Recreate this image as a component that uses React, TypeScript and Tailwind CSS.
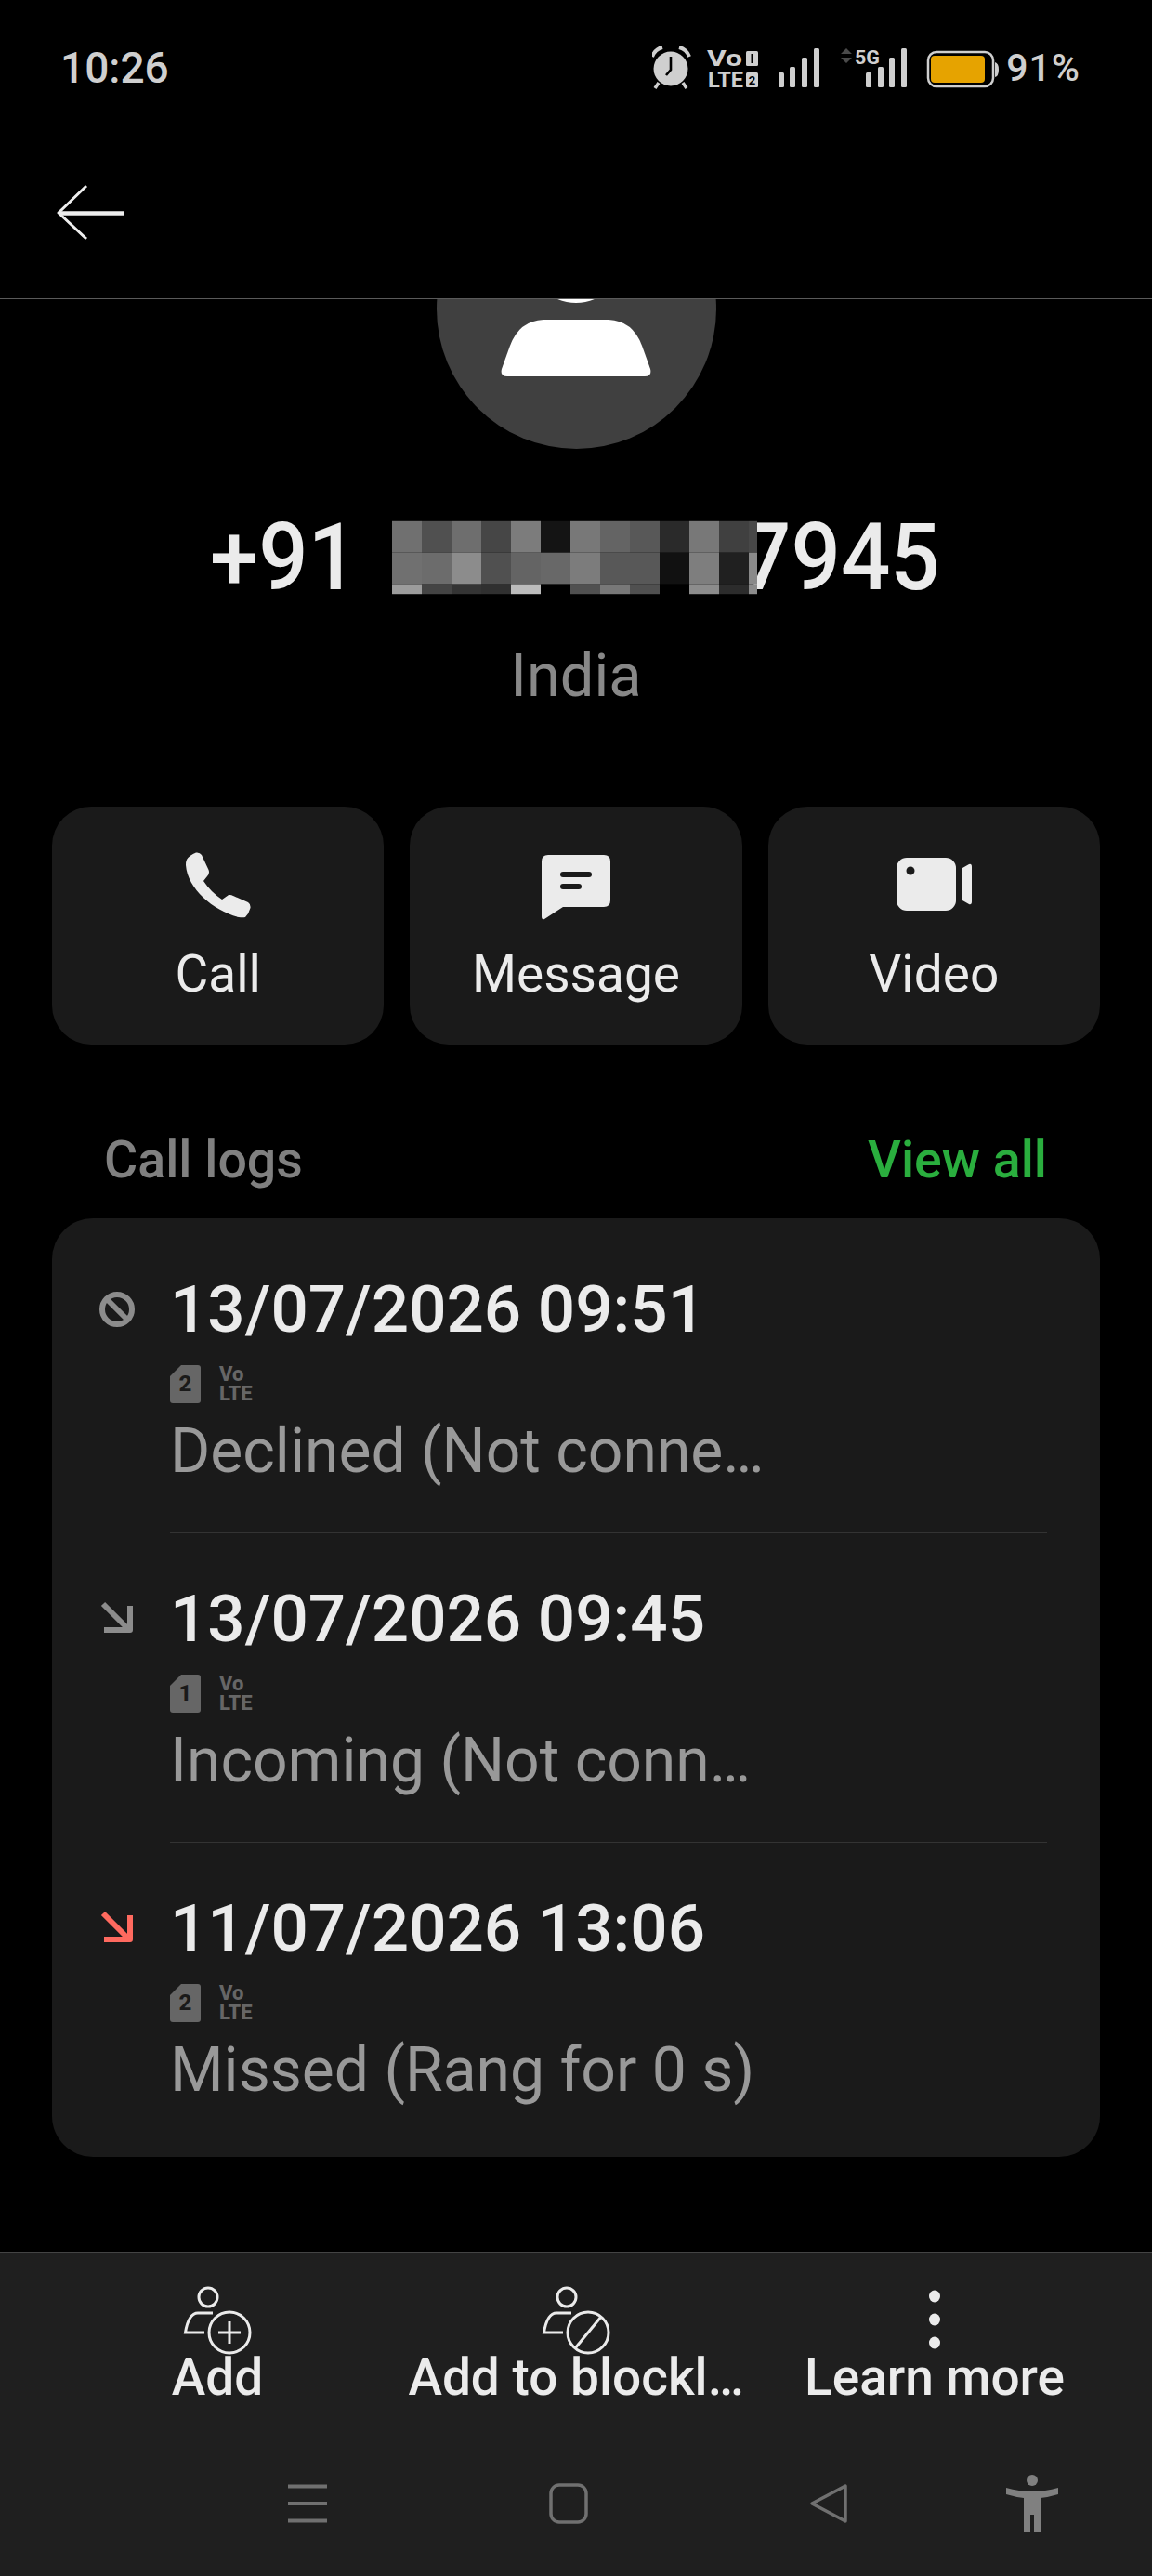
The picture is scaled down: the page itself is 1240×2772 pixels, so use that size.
import React from "react";

const font = { fontFamily: "Roboto, 'Liberation Sans', sans-serif" };

const cells = [
  "bg-[#707070]","bg-[#505050]","bg-[#6e6e6e]","bg-[#464646]","bg-[#7c7c7c]","bg-[#141414]","bg-[#787878]","bg-[#646464]","bg-[#585858]","bg-[#2a2a2a]","bg-[#787878]","bg-[#404040]","bg-[#484848]",
  "bg-[#707070]","bg-[#6c6c6c]","bg-[#8c8c8c]","bg-[#505050]","bg-[#646464]","bg-[#686868]","bg-[#7c7c7c]","bg-[#585858]","bg-[#585858]","bg-[#111111]","bg-[#7e7e7e]","bg-[#202020]","bg-[#8a8a8a]",
  "bg-[#9c9c9c]","bg-[#444444]","bg-[#343434]","bg-[#303030]","bg-[#bcbcbc]","bg-[#000000]","bg-[#505050]","bg-[#787878]","bg-[#505050]","bg-[#000000]","bg-[#8c8c8c]","bg-[#2c2c2c]","bg-[#8c8c8c]",
];

function StatusIcons() {
  const c = "#cfcfcf";
  const bars = (x: number[]) =>
    x.map((bx, i) => (
      <rect key={bx} x={bx} y={[79, 73, 63, 53][i]} width={6} height={95 - [79, 73, 63, 53][i]} rx={1.5} fill={c} />
    ));
  return (
    <svg width="374" height="60" viewBox="705 45 374 60" className="block">
      <circle cx="725" cy="75" r="18.5" fill={c} />
      <path d="M725 62v14l-5 6" stroke="#000" strokeWidth="2.6" fill="none" />
      <path d="M705 62q3-8 11-10M745 62q-3-8-11-10" stroke={c} strokeWidth="4" fill="none" />
      <path d="M712 90l-4 6M738 90l4 6" stroke={c} strokeWidth="3.5" />
      <text x="764" y="72" fontSize="24" fontWeight="700" fill={c} fontFamily="Roboto" textLength="38" lengthAdjust="spacingAndGlyphs">Vo</text>
      <text x="765" y="95" fontSize="24" fontWeight="700" fill={c} fontFamily="Roboto" textLength="38" lengthAdjust="spacingAndGlyphs">LTE</text>
      <rect x="806" y="56" width="13" height="16" rx="1.5" fill={c} />
      <rect x="811.5" y="59" width="2.5" height="10" fill="#000" />
      <rect x="806" y="79" width="13" height="16" rx="1.5" fill={c} />
      <text x="812.5" y="92" fontSize="13" fontWeight="700" fill="#000" textAnchor="middle" fontFamily="Roboto">2</text>
      {bars([841, 853, 866, 879])}
      <path d="M914 53l6 6h-12zM914 69l6-6h-12z" fill="#4a4a4a" />
      <text x="923" y="69.5" fontSize="21" fontWeight="700" fill={c} fontFamily="Roboto" textLength="27" lengthAdjust="spacingAndGlyphs">5G</text>
      {bars([935, 948, 960, 973])}
      <rect x="1002" y="57" width="70" height="37" rx="9" fill="none" stroke={c} strokeWidth="2.5" />
      <rect x="1005" y="61" width="58" height="29" rx="4" fill="#e6a300" />
      <path d="M1074 68q4 1 4 8t-4 8z" fill={c} />
    </svg>
  );
}

function BackArrow() {
  return (
    <svg width="76" height="62" viewBox="60 199 76 62" className="block">
      <path d="M93 201L63 230L93 258" fill="none" stroke="#eeeeee" strokeWidth="3" strokeLinejoin="round" />
      <path d="M64 230.5H133" stroke="#eeeeee" strokeWidth="4.5" />
    </svg>
  );
}

function PhoneIcon() {
  return (
    <svg width="70" height="71" viewBox="0 0 70 71" className="block">
      <path d="M1 8Q4 3 11 .5Q15 0 17 3L24.5 19Q26 23 23 26L19 31Q27 43 39 51L44 47.5Q47 45 51 47L67 54Q70 56 69.5 60Q68 66 64 70Q61 70.5 57 70C30 63 2 40 0 14Q0 10 1 8Z" fill="#ebebeb" />
    </svg>
  );
}

function MessageIcon() {
  return (
    <svg width="74" height="70" viewBox="0 0 74 70" className="block translate-y-[3px]">
      <path d="M7 0H67Q74 0 74 7V49Q74 56 67 56H23L3 69Q0 70 0 66V7Q0 0 7 0Z" fill="#ebebeb" />
      <rect x="20" y="18" width="34" height="6" rx="3" fill="#1a1a1a" />
      <rect x="20" y="31" width="23" height="6" rx="3" fill="#1a1a1a" />
    </svg>
  );
}

function VideoIcon() {
  return (
    <svg width="81" height="70" viewBox="0 0 81 58" className="block">
      <rect x="0" y="0" width="64" height="57" rx="11" fill="#ebebeb" />
      <path d="M71 11L78 7Q81 6 81 10V47Q81 51 78 50L71 46Z" fill="#ebebeb" />
      <circle cx="15" cy="14" r="4.5" fill="#1a1a1a" />
    </svg>
  );
}

function BanIcon() {
  return (
    <svg width="38" height="38" viewBox="0 0 38 38" className="block">
      <circle cx="19" cy="19" r="16" fill="none" stroke="#8c8c8c" strokeWidth="6" />
      <path d="M8 8L30 30" stroke="#8c8c8c" strokeWidth="6" />
    </svg>
  );
}

function ArrowIn({ color }: { color: string }) {
  return (
    <svg width="36" height="36" viewBox="0 0 36 36" className="block">
      <path d="M3 3L30 30M4 31H32V5" fill="none" stroke={color} strokeWidth="6" strokeLinejoin="round" />
    </svg>
  );
}

function SimIcon({ n }: { n: string }) {
  return (
    <svg width="33" height="41" viewBox="0 0 33 41" className="block">
      <path d="M12 0H30Q33 0 33 3V38Q33 41 30 41H3Q0 41 0 38V12Z" fill="#666666" />
      <text x="16.5" y="28" textAnchor="middle" fontSize="24" fontWeight="800" fill="#1a1a1a" fontFamily="Roboto">{n}</text>
    </svg>
  );
}

function VoLte() {
  return (
    <div className="flex flex-col text-[#666666] font-extrabold text-[22px] leading-[21px] mt-[-1px]" style={font}>
      <span>Vo</span>
      <span>LTE</span>
    </div>
  );
}

function AddIcon({ kind }: { kind: "plus" | "ban" }) {
  return (
    <svg width="74" height="74" viewBox="199 2460 74 74" className="block">
      <circle cx="226" cy="2472" r="10" fill="none" stroke="#ebebeb" strokeWidth="3" />
      <path d="M231 2489H215Q205 2489 201.5 2510H222" fill="none" stroke="#ebebeb" strokeWidth="3" />
      <circle cx="249" cy="2510" r="22" fill="none" stroke="#ebebeb" strokeWidth="3" />
      {kind === "plus" ? (
        <path d="M249 2498V2522M237 2510H261" stroke="#ebebeb" strokeWidth="3" />
      ) : (
        <path d="M263 2493L235 2527" stroke="#ebebeb" strokeWidth="3" />
      )}
    </svg>
  );
}

function Dots() {
  return (
    <svg width="74" height="74" viewBox="0 0 74 74" className="block">
      <ellipse cx="37" cy="11" rx="6" ry="6.5" fill="#ebebeb" />
      <ellipse cx="37" cy="36" rx="6" ry="6.5" fill="#ebebeb" />
      <ellipse cx="37" cy="61" rx="6" ry="6.5" fill="#ebebeb" />
    </svg>
  );
}

function LogRow({
  icon, sim, date, status, last,
}: { icon: React.ReactNode; sim: string; date: string; status: string; last?: boolean }) {
  return (
    <div className="flex">
      <div className="w-[127px] shrink-0 flex justify-center pt-[73px] pl-[13px]">
        <div className="w-[40px] h-[40px] flex justify-center items-start">{icon}</div>
      </div>
      <div className={`flex-1 pt-[50px] pb-[45px] ${last ? "" : "border-b border-[#333333]"}`}>
        <div className="text-[71px] leading-[84px] font-medium text-[#ebebeb] whitespace-nowrap">{date}</div>
        <div className="flex gap-[20px] mt-[18px] h-[41px]">
          <SimIcon n={sim} />
          <VoLte />
        </div>
        <div className="text-[66px] leading-[84px] mt-[10px] text-[#999999] whitespace-nowrap">{status}</div>
      </div>
    </div>
  );
}

function ActionCard({ icon, label }: { icon: React.ReactNode; label: string }) {
  return (
    <div className="flex-1 h-[256px] rounded-[42px] bg-[#1a1a1a] flex flex-col items-center pt-[48px]">
      <div className="h-[72px] flex items-center">{icon}</div>
      <div className="text-[55px] leading-[70px] mt-[25px] text-[#ebebeb]">{label}</div>
    </div>
  );
}

export default function App() {
  return (
    <div className="w-[1240px] h-[2772px] bg-black flex flex-col overflow-hidden" style={font}>
      <div className="h-[147px] flex items-center justify-between pl-[65px] pr-[77px] shrink-0">
        <div className="text-[46px] font-medium text-[#cfcfcf]">10:26</div>
        <div className="flex items-center gap-[7px]">
          <StatusIcons />
          <div className="text-[41px] font-medium text-[#cfcfcf] tracking-[1px]">91%</div>
        </div>
      </div>
      <div className="h-[175px] shrink-0 border-b border-[#5a5a5a] flex items-center pl-[60px] pb-[10px]">
        <BackArrow />
      </div>

      <div className="flex-1 overflow-hidden min-h-0">
        <div className="w-[301px] h-[301px] mx-auto -mt-[140px] rounded-full bg-[#404040] flex flex-col items-center overflow-hidden">
          <div className="w-[104px] h-[104px] rounded-full bg-white mt-[40px] shrink-0"></div>
          <svg width="162" height="62" viewBox="0 0 162 62" className="block mt-[18px] shrink-0">
            <path d="M46 0H116Q142 1 152 28L161 53Q163 61 155 61H7Q-1 61 1 53L10 28Q20 1 46 0Z" fill="#ffffff" />
          </svg>
        </div>

        <div className="mt-[67px] h-[100px] flex items-center pl-[226px] text-[94px] leading-[100px] font-medium text-[#ebebeb] scale-y-[1.06]">
          <span>+91</span>
          <div className="relative z-10 ml-[37px] -mr-[17px] w-[393px] grid grid-cols-[repeat(12,32px)_9px] grid-rows-[32px_32px_10px]">
            {cells.map((c, i) => (
              <div key={i} className={c}></div>
            ))}
          </div>
          <span>7945</span>
        </div>

        <div className="mt-[37px] h-[80px] text-center text-[65px] leading-[80px] text-[#888888]">India</div>

        <div className="mt-[101px] px-[56px] flex gap-[28px]">
          <ActionCard icon={<PhoneIcon />} label="Call" />
          <ActionCard icon={<MessageIcon />} label="Message" />
          <ActionCard icon={<VideoIcon />} label="Video" />
        </div>

        <div className="mt-[90px] h-[70px] pl-[112px] pr-[113px] flex justify-between items-center text-[55.5px] leading-[70px] font-medium">
          <span className="text-[#808080]">Call logs</span>
          <span className="text-[#2aae3e]">View all</span>
        </div>

        <div className="mt-[27px] mx-[56px] rounded-[44px] bg-[#1a1a1a] pt-[6px] pb-[6px] pr-[57px]">
          <LogRow icon={<BanIcon />} sim="2" date="13/07/2026 09:51" status="Declined (Not conne…" />
          <LogRow icon={<ArrowIn color="#8c8c8c" />} sim="1" date="13/07/2026 09:45" status="Incoming (Not conn…" />
          <LogRow icon={<ArrowIn color="#ff6a5f" />} sim="2" date="11/07/2026 13:06" status="Missed (Rang for 0 s)" last />
        </div>
      </div>

      <div className="h-[349px] shrink-0 bg-[#1f1f1f] border-t border-[#444444]">
        <div className="grid grid-cols-3 px-[41px] pt-[36px]">
          {[
            { icon: <AddIcon kind="plus" />, label: "Add" },
            { icon: <AddIcon kind="ban" />, label: "Add to blockl…" },
            { icon: <Dots />, label: "Learn more" },
          ].map((a) => (
            <div key={a.label} className="flex flex-col items-center">
              {a.icon}
              <div className="-mt-[6px] text-[55px] leading-[60px] font-medium text-[#ebebeb] whitespace-nowrap">{a.label}</div>
            </div>
          ))}
        </div>
        <div className="mt-[75px] flex items-center pl-[308px]">
          <svg width="46" height="44" viewBox="0 0 46 44" className="block">
            <path d="M2 3.5H44M2 22H44M2 40.5H44" stroke="#707070" strokeWidth="4" />
          </svg>
          <svg width="44" height="44" viewBox="0 0 44 44" className="block ml-[236px]">
            <rect x="3" y="2" width="38" height="40" rx="9" fill="none" stroke="#707070" strokeWidth="3.5" />
          </svg>
          <svg width="44" height="44" viewBox="0 0 44 44" className="block ml-[236px]">
            <path d="M40 3V41L4 22Z" fill="none" stroke="#707070" strokeWidth="3.5" strokeLinejoin="round" />
          </svg>
          <svg width="56" height="62" viewBox="0 0 56 62" className="block ml-[169px]">
            <circle cx="28" cy="6" r="6" fill="#808080" />
            <path d="M0 14Q14 18 28 18Q42 18 56 14V21Q46 24 37 25V62H30V43H26V62H19V25Q10 24 0 21Z" fill="#808080" />
          </svg>
        </div>
      </div>
    </div>
  );
}
